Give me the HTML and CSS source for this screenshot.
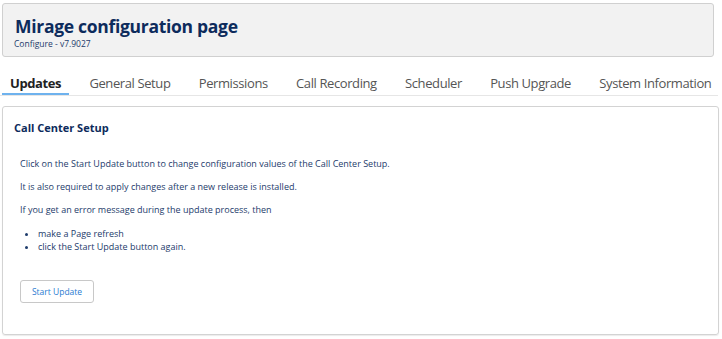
FILE: index.html
```html
<!DOCTYPE html>
<html>
<head>
<meta charset="utf-8">
<link rel="stylesheet" href="styles.css">
</head>
<body>
<header class="hero">
  <h1 class="title">Mirage configuration page</h1>
  <div class="subtitle">Configure - v7.9027</div>
</header>
<nav class="tabs">
  <a class="tab active">Updates</a>
  <a class="tab">General Setup</a>
  <a class="tab">Permissions</a>
  <a class="tab">Call Recording</a>
  <a class="tab">Scheduler</a>
  <a class="tab">Push Upgrade</a>
  <a class="tab">System Information</a>
</nav>
<section class="panel">
  <h2 class="panel-title">Call Center Setup</h2>
  <div class="body">
    <p>Click on the Start Update button to change configuration values of the Call Center Setup.</p>
    <p>It is also required to apply changes after a new release is installed.</p>
    <p>If you get an error message during the update process, then</p>
    <ul>
      <li>make a Page refresh</li>
      <li>click the Start Update button again.</li>
    </ul>
    <button class="btn">Start Update</button>
  </div>
</section>
</body>
</html>
```
FILE: styles.css
```css
html, body { margin: 0; padding: 0; background: #fff; }
body {
  font-family: "Open Sans", "Noto Sans", sans-serif;
  width: 722px;
  height: 339px;
  overflow: hidden;
}
.hero {
  margin: 3px 0 0 2px;
  height: 52px;
  width: 699px;
  background: #f2f2f2;
  border: 1px solid #d0d0d0;
  border-radius: 3px;
  padding: 0 0 0 11px;
}
.title {
  margin: 12px 0 0 1px;
  font-size: 17.5px;
  line-height: 20px;
  font-weight: 700;
  color: #0d2b5c;
  letter-spacing: -0.3px;
}
.subtitle {
  font-size: 8.5px;
  line-height: 10px;
  color: #1d3b6b;
  margin-top: 3px;
}
.tabs {
  display: flex;
  gap: 12.3px;
  box-sizing: border-box;
  margin-top: 17px;
  padding: 0 0 0 2px;
  border-bottom: 1px solid #e6e6e6;
  width: 718px;
  height: 22px;
  overflow: hidden;
}
.tab {
  font-size: 13px;
  line-height: 19px;
  color: #555;
  white-space: nowrap;
  letter-spacing: -0.4px;
  padding: 0 8px;
}
.tab.active {
  font-weight: 700;
  color: #222;
  border-bottom: 2px solid #6eb2ee;
}
.panel {
  margin: 10px 0 0 2px;
  width: 715px;
  height: 227px;
  border: 1px solid #d3d3d3;
  border-radius: 3px;
  box-shadow: 0 1px 1px rgba(0,0,0,0.08);
}
.panel-title {
  margin: 14px 0 0 11px;
  font-size: 11px;
  line-height: 14px;
  font-weight: 700;
  color: #0d2b5c;
}
.body {
  padding: 23px 0 0 17px;
  font-size: 9px;
  color: #1d3b6b;
}
.body p { margin: 0 0 11px 0; line-height: 12px; }
.body ul { margin: 0; padding: 0 0 0 18px; }
.body li { line-height: 13px; }
.btn {
  display: block;
  margin-top: 27px;
  width: 74px;
  height: 23px;
  background: #fff;
  border: 1px solid #c8c8c8;
  border-radius: 3px;
  font-family: inherit;
  font-size: 8.5px;
  color: #2a7bd1;
  padding: 0;
}
```
